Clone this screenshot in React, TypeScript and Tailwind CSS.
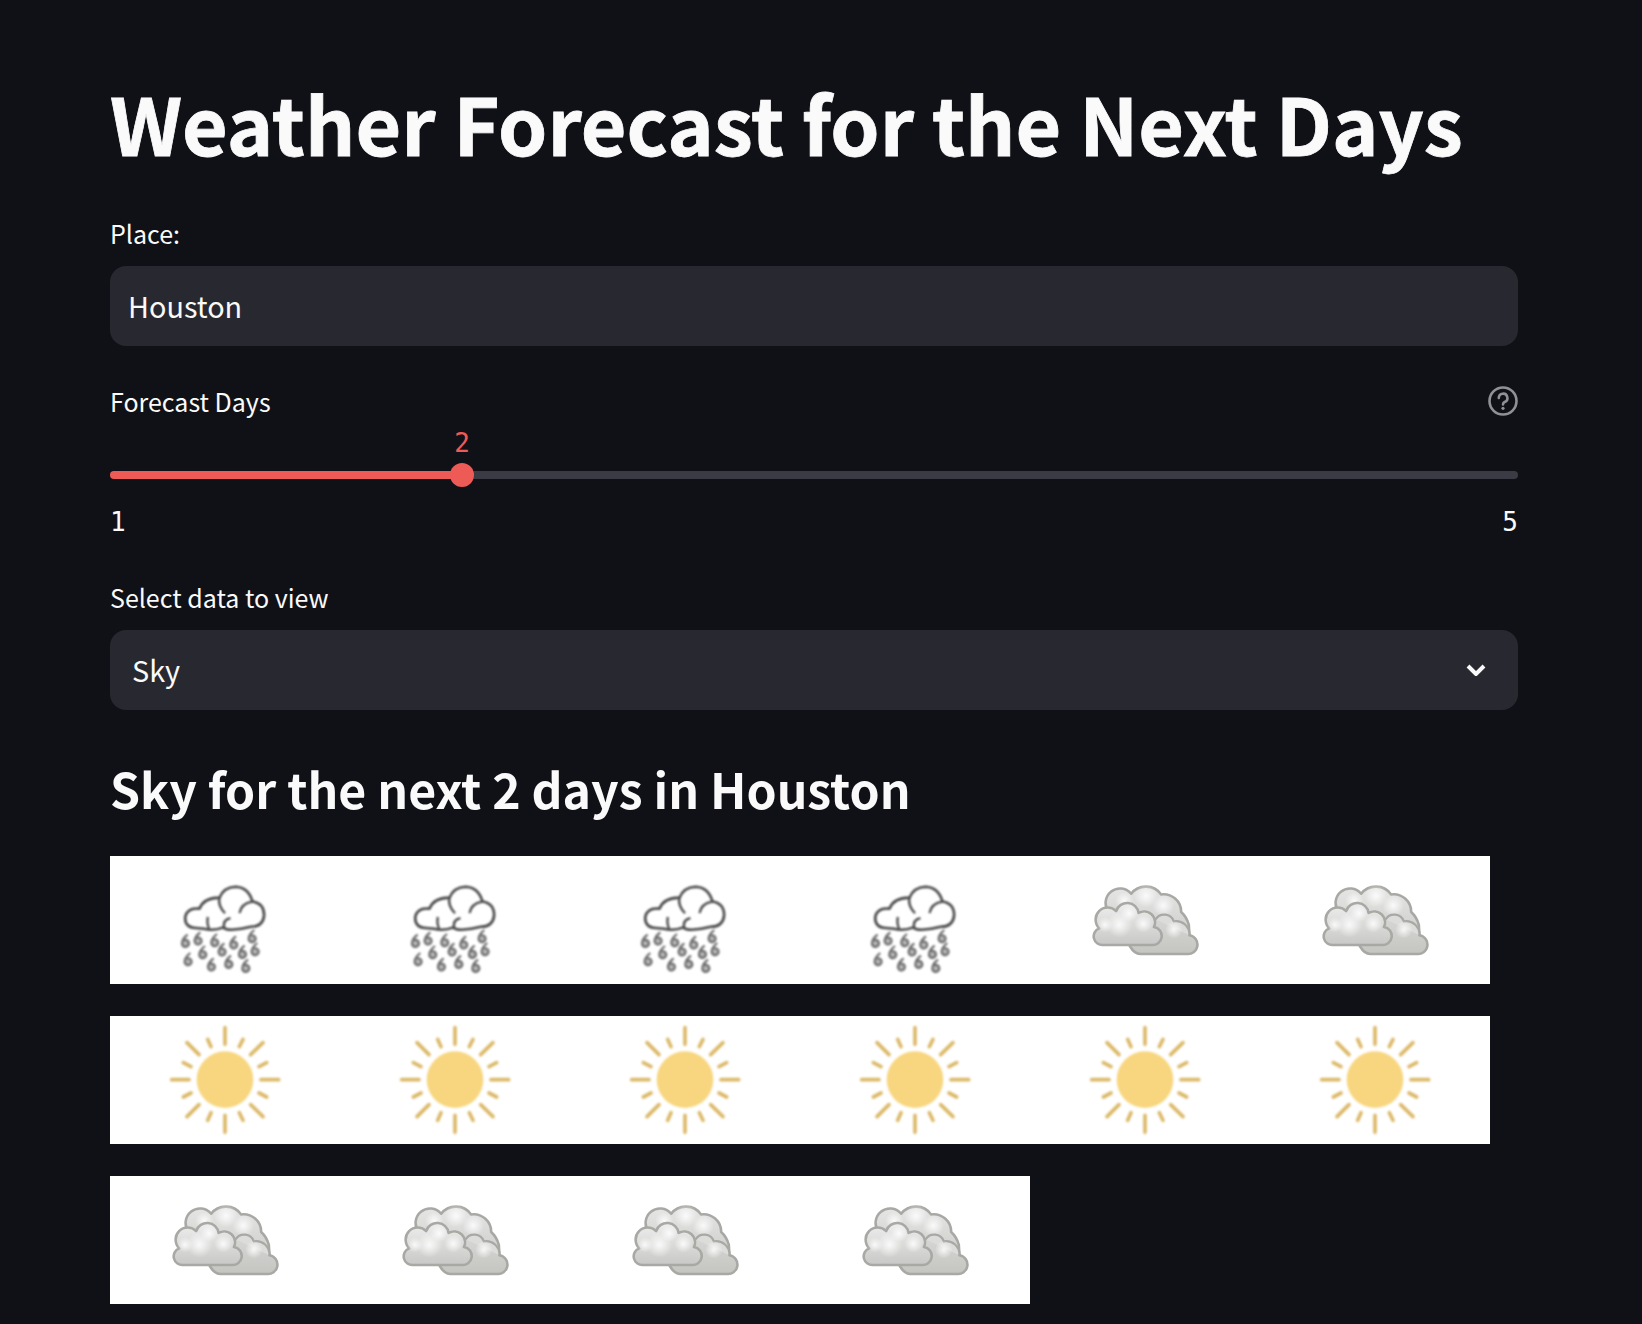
const sans = "font-['Noto_Sans_CJK_JP','Noto_Sans',sans-serif]";

const Drop = ({ x, y }: { x: number; y: number }) => (
  <path
    transform={`translate(${x} ${y})`}
    d="M6 -20 Q-9 -9 -11 4 A10.5 10.5 0 1 0 9 2 A10 10 0 0 0 -5 -3"
    fill="#b8b8b8"
    stroke="#6a6a6a"
    strokeWidth={6.5}
  />
);

const drops = [
  [257, 274], [295, 267], [345, 272], [402, 279], [457, 260], [466, 299], [428, 307],
  [367, 300], [309, 308], [265, 329], [335, 345], [387, 337], [438, 349],
];

function RainIcon() {
  return (
    <svg viewBox="30 18 690 384" className="block h-[128px] w-[230px] blur-[0.8px]">
      <g transform="translate(373 175) scale(0.97) translate(-373 -175)">
        <path
          d="M285 236 Q250 234 252 202 Q258 172 296 176 Q310 142 358 142 Q370 110 408 108 Q448 110 460 154 Q497 160 496 198 Q492 232 455 232 Q425 240 395 241 Q378 241 370 234 Q340 246 310 238 Z"
          fill="#fff"
          stroke="#454545"
          strokeWidth={8}
          strokeLinejoin="round"
        />
        <path
          d="M358 142 Q352 165 375 190 M420 190 Q424 160 460 154 M372 234 Q368 210 392 205 M322 202 Q318 222 326 238"
          fill="none"
          stroke="#454545"
          strokeWidth={7}
        />
      </g>
      {drops.map(([x, y], i) => (
        <Drop key={i} x={x} y={y} />
      ))}
    </svg>
  );
}

function CloudIcon({ id }: { id: string }) {
  const soft = `url(#${id}s)`;
  return (
    <svg viewBox="-90 18 690 384" className="block h-[128px] w-[230px] blur-[0.7px]">
      <defs>
        <linearGradient id={`${id}b`} x1="0" y1="0" x2="0" y2="1">
          <stop offset="0" stopColor="#e6e6e6" />
          <stop offset="1" stopColor="#c4c4c1" />
        </linearGradient>
        <linearGradient id={`${id}f`} x1="0" y1="0" x2="0" y2="1">
          <stop offset="0" stopColor="#eeeeee" />
          <stop offset="1" stopColor="#c8c8c6" />
        </linearGradient>
        <radialGradient id={`${id}s`}>
          <stop offset="0" stopColor="#ffffff" stopOpacity="0.85" />
          <stop offset="1" stopColor="#ffffff" stopOpacity="0" />
        </radialGradient>
      </defs>
      <g transform="translate(255 210) scale(0.96) translate(-255 -210)">
        <path
          d="M142 185 A42 42 0 0 1 212 128 A55 50 0 0 1 305 130 A55 55 0 0 1 368 185 Q385 200 392 225 L394 258 A28 28 0 0 1 385 316 H240 Q222 316 208 292 Z"
          fill={`url(#${id}b)`}
          stroke="#a8a8a4"
          strokeWidth={8}
          strokeLinejoin="round"
        />
        <circle cx="258" cy="135" r="36" fill={soft} />
        <circle cx="312" cy="165" r="34" fill={soft} />
        <circle cx="190" cy="150" r="28" fill={soft} />
        <path d="M288 208 A32 32 0 0 1 345 214 A42 42 0 0 1 394 258" fill="#dcdcdb" stroke="#a8a8a4" strokeWidth={7} />
        <circle cx="345" cy="240" r="28" fill={soft} />
        <path
          d="M125 288 A27 27 0 0 1 112 236 A34 34 0 0 1 165 182 A36 36 0 0 1 235 188 A34 34 0 0 1 283 232 A28 28 0 0 1 275 288 Z"
          fill={`url(#${id}f)`}
          stroke="#a8a8a4"
          strokeWidth={8}
          strokeLinejoin="round"
        />
        <circle cx="175" cy="225" r="40" fill={soft} />
        <circle cx="130" cy="225" r="24" fill={soft} />
        <circle cx="205" cy="190" r="26" fill={soft} />
        <circle cx="250" cy="222" r="28" fill={soft} />
      </g>
    </svg>
  );
}

function SunIcon() {
  return (
    <svg viewBox="30 18 690 384" className="block h-[128px] w-[230px] blur-[0.8px]">
      <g stroke="#dcb968" strokeWidth={11} strokeLinecap="round">
        <path d="M375 53V103M375 316V367M215 209H267M483 209H536" />
        <path d="M261 98L297 134M489 98L452 134M297 284L261 320M452 284L489 320" />
        <path d="M323 88L333 110M429 88L418 110M250 158L273 170M500 158L477 170M250 261L273 249M500 261L477 249M333 308L323 331M418 308L429 331" />
      </g>
      <circle cx="375" cy="209" r="85" fill="#f8d67f" />
    </svg>
  );
}

const Cell = ({ children }: { children: React.ReactNode }) => <div className="h-[128px] w-[230px] shrink-0">{children}</div>;

function Row({ children }: { children: React.ReactNode }) {
  return <div className="flex w-fit bg-white">{children}</div>;
}

export default function App() {
  return (
    <div className={`h-[1324px] overflow-hidden bg-[#0f1116] pt-[67px] pr-[124px] pl-[110px] text-[#fafafa] ${sans}`}>
      <h1 className="h-[110px] text-[78.8px] leading-[110px] font-bold whitespace-nowrap [-webkit-text-stroke:0.8px_#fafafa]">Weather Forecast for the Next Days</h1>

      <div className="mt-[36px] h-[40px] text-[25px] leading-[40px]">Place:</div>
      <div className="mt-[13px] flex h-[80px] items-center rounded-2xl bg-[#282930] px-[18px] text-[28.8px]">Houston</div>

      <div className="mt-[35px] flex h-[40px] items-center justify-between text-[25px] leading-[40px]">
        <span>Forecast Days</span>
        <svg viewBox="0 0 30 30" className="h-[30px] w-[30px]" fill="none">
          <circle cx="15" cy="15" r="13.5" stroke="#909095" strokeWidth="2.6" />
          <path d="M10.8 12 A4.3 4.3 0 1 1 16.6 16 Q15 16.8 15 18.5" stroke="#909095" strokeWidth="2.6" strokeLinecap="round" />
          <circle cx="15" cy="22.3" r="1.6" fill="#909095" />
        </svg>
      </div>

      <div className="relative mt-[50px] flex h-[8px]">
        <span className="absolute bottom-[19px] left-[352px] w-[0px] text-[26px] leading-[34px] text-[#ee5b56] font-['DejaVu_Sans_Mono',monospace]">
          <span className="block w-[20px] -translate-x-1/2 text-center">2</span>
        </span>
        <div className="w-[352px] rounded-l-full bg-[#ee5b56]" />
        <div className="flex-1 rounded-r-full bg-[#3a3b45]" />
        <div className="absolute top-[-8px] left-[340px] h-[24px] w-[24px] rounded-full bg-[#ee5b56]" />
      </div>
      <div className="mt-[26px] flex h-[34px] justify-between text-[26px] leading-[34px] font-['DejaVu_Sans_Mono',monospace]">
        <span>1</span>
        <span>5</span>
      </div>

      <div className="mt-[38px] h-[40px] text-[25px] leading-[40px]">Select data to view</div>
      <div className="mt-[13px] flex h-[80px] items-center justify-between rounded-2xl bg-[#282930] pr-[32px] pl-[22px] text-[28.8px]">
        <span>Sky</span>
        <svg viewBox="0 0 20 12" className="h-[12px] w-[20px]" fill="none">
          <path d="M2 2L10 10L18 2" stroke="#fafafa" strokeWidth="4" />
        </svg>
      </div>

      <h2 className="mt-[46px] h-[64px] text-[48.2px] leading-[64px] font-semibold whitespace-nowrap">Sky for the next 2 days in Houston</h2>

      <div className="mt-[36px] flex flex-col gap-[32px]">
        <Row>
          <Cell><RainIcon /></Cell>
          <Cell><RainIcon /></Cell>
          <Cell><RainIcon /></Cell>
          <Cell><RainIcon /></Cell>
          <Cell><CloudIcon id="a" /></Cell>
          <Cell><CloudIcon id="b" /></Cell>
        </Row>
        <Row>
          <Cell><SunIcon /></Cell>
          <Cell><SunIcon /></Cell>
          <Cell><SunIcon /></Cell>
          <Cell><SunIcon /></Cell>
          <Cell><SunIcon /></Cell>
          <Cell><SunIcon /></Cell>
        </Row>
        <Row>
          <Cell><CloudIcon id="c" /></Cell>
          <Cell><CloudIcon id="d" /></Cell>
          <Cell><CloudIcon id="e" /></Cell>
          <Cell><CloudIcon id="f" /></Cell>
        </Row>
      </div>
    </div>
  );
}
